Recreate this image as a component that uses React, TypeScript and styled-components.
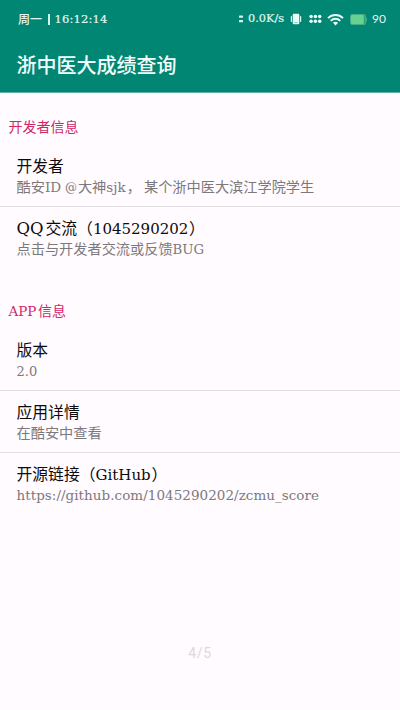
import React from 'react';
import styled, { createGlobalStyle } from 'styled-components';

const GlobalStyle = createGlobalStyle`
  * { box-sizing: border-box; }
  body { margin: 0; background: #fffbff; }
`;

const Screen = styled.div`
  width: 400px;
  height: 710px;
  display: flex;
  flex-direction: column;
  background: #fffbff;
  overflow: hidden;
  font-family: 'Noto Sans CJK SC', sans-serif;
  white-space: nowrap;
`;

const Header = styled.header`
  height: 93px;
  background: #018673;
  border-bottom: 1px solid #62b1a6;
  color: #f3fffc;
`;

const StatusBar = styled.div`
  height: 37px;
  padding: 1px 14px 0 18px;
  display: flex;
  align-items: center;
  justify-content: space-between;
  font-size: 12px;
  font-weight: 500;
  color: #e2f6f1;
`;

const Clock = styled.div`
  display: flex;
  align-items: center;
  line-height: 16px;
`;

const ClockBar = styled.span`
  width: 1.5px;
  height: 11px;
  margin: 0 5px 0 6px;
  background: #d4f1ea;
`;

const StatusIcons = styled.div`
  display: flex;
  align-items: center;
  line-height: 16px;
`;

const BatteryLevel = styled.span`
  width: 14px;
  margin-left: 5px;
  font: 400 12px/16px Lato, sans-serif;
`;

const Toolbar = styled.h1`
  margin: 0;
  height: 55px;
  padding-left: 16.5px;
  font-size: 20px;
  font-weight: 500;
  line-height: 55px;
`;

const Latin = styled.span<{ $w: number; $size: number; $track?: number; $heavy?: boolean }>`
  display: inline-block;
  width: ${p => p.$w}px;
  font-family: 'DejaVu Serif', serif;
  font-weight: 400;
  font-size: ${p => p.$size}px;
  letter-spacing: ${p => p.$track ?? 0}px;
  -webkit-text-stroke: ${p => (p.$heavy ? '0.2px currentColor' : '0')};
  white-space: pre;
`;

const Section = styled.section`
  padding-top: 23px;
  height: 176px;
  & + & { padding-top: 31px; height: 246px; }
`;

const SectionTitle = styled.h2`
  margin: 0 0 9px 8.5px;
  height: 20px;
  font-size: 14px;
  font-weight: 400;
  line-height: 20px;
  color: #cf2768;
`;

const Row = styled.div`
  height: 62px;
  padding: 10px 0 0 16.5px;
  &:not(:last-child) { border-bottom: 1px solid #e3dfe3; }
`;

const RowTitle = styled.div`
  height: 21px;
  line-height: 22px;
  font-size: 15.8px;
  color: #0c0b0c;
`;

const Summary = styled.div`
  height: 20px;
  line-height: 20px;
  font-size: 14.2px;
  font-weight: 400;
  color: #7c797c;
`;

const Pager = styled.footer`
  margin-top: auto;
  height: 67px;
  text-align: center;
  font: 14px/20px Roboto, sans-serif;
  letter-spacing: 0.6px;
  color: #dcd8dc;
`;

const SpeedIcon = () => (
  <svg width="6" height="10" viewBox="0 0 6 10" fill="#d8f4ec">
    <rect x="1" y="1.5" width="4" height="2.3" rx=".6" />
    <rect x="1" y="6" width="4" height="2.3" rx=".6" />
  </svg>
);

const VibrateIcon = () => (
  <svg width="12" height="12" viewBox="0 0 12 12" fill="#e8fff9">
    <rect x="2.7" y=".8" width="6.6" height="10.4" rx="1.2" />
    <rect x=".8" y="3" width="1.1" height="6" rx=".5" />
    <rect x="10.1" y="3" width="1.1" height="6" rx=".5" />
    <path d="M4.5 9.6h3" stroke="#5fae9f" strokeWidth=".7" />
  </svg>
);

/* Three columns of two dots. */
const GridIcon = () => (
  <svg width="13" height="10" viewBox="0 0 13 10" fill="#e8fff9">
    {[2.1, 6.4, 10.7].map(x => [2.5, 7.2].map(y => <circle key={`${x}-${y}`} cx={x} cy={y} r="1.75" />))}
  </svg>
);

const WifiIcon = () => (
  <svg width="17" height="13" viewBox="0 0 17 13" fill="none" stroke="#e8fff9" strokeWidth="1.9">
    <path d="M1 5.1C5.1.9 11.9.9 16 5.1" />
    <path d="M3.7 7.8c2.7-2.7 6.9-2.7 9.6 0" />
    <path d="M5.9 9.7L8.5 12.5l2.6-2.8c-1.5-1.3-3.7-1.3-5.2 0z" fill="#e8fff9" stroke="none" />
  </svg>
);

const BatteryIcon = () => (
  <svg width="17" height="11" viewBox="0 0 17 11">
    <rect x=".5" y=".5" width="15" height="10" rx="1.5" fill="#2d9e79" stroke="#46ad87" />
    <rect x="1" y="1" width="12.8" height="9" rx="1" fill="#65d291" />
    <rect x="15.8" y="3.5" width="1" height="4" fill="#46ad87" />
  </svg>
);

const Icon = styled.span<{ $ml: number }>`
  display: flex;
  margin-left: ${p => p.$ml}px;
`;

export default function App() {
  return (
    <Screen>
      <GlobalStyle />
      <Header>
        <StatusBar>
          <Clock>周一<ClockBar /><Latin $w={56} $size={11.5} $track={0.15} $heavy>16:12:14</Latin></Clock>
          <StatusIcons>
            <SpeedIcon />
            <Icon $ml={4}><Latin $w={37} $size={11.3} $heavy>0.0K/s</Latin></Icon>
            <Icon $ml={5}><VibrateIcon /></Icon>
            <Icon $ml={7}><GridIcon /></Icon>
            <Icon $ml={5}><WifiIcon /></Icon>
            <Icon $ml={6}><BatteryIcon /></Icon>
            <BatteryLevel>90</BatteryLevel>
          </StatusIcons>
        </StatusBar>
        <Toolbar>浙中医大成绩查询</Toolbar>
      </Header>
      <Section>
        <SectionTitle>开发者信息</SectionTitle>
        <Row>
          <RowTitle>开发者</RowTitle>
          <Summary>
            酷安<Latin $w={20} $size={13.5}>ID</Latin><Latin $w={13} $size={12}>@</Latin>大神<Latin $w={20.5} $size={13.5}>sjk</Latin>，<Latin $w={3} $size={13}> </Latin>某个浙中医大滨江学院学生
          </Summary>
        </Row>
        <Row>
          <RowTitle><Latin $w={29} $size={16.5}>QQ</Latin>交流（<Latin $w={96} $size={15}>1045290202</Latin>）</RowTitle>
          <Summary>点击与开发者交流或反馈<Latin $w={32} $size={13.3}>BUG</Latin></Summary>
        </Row>
      </Section>
      <Section>
        <SectionTitle><Latin $w={29.5} $size={13.5}>APP</Latin>信息</SectionTitle>
        <Row>
          <RowTitle>版本</RowTitle>
          <Summary><Latin $w={21} $size={13}>2.0</Latin></Summary>
        </Row>
        <Row>
          <RowTitle>应用详情</RowTitle>
          <Summary>在酷安中查看</Summary>
        </Row>
        <Row>
          <RowTitle>开源链接（<Latin $w={56} $size={15}>GitHub</Latin>）</RowTitle>
          <Summary><Latin $w={304} $size={13.5} $track={0.04}>https://github.com/1045290202/zcmu_score</Latin></Summary>
        </Row>
      </Section>
      <Pager>4/5</Pager>
    </Screen>
  );
}
